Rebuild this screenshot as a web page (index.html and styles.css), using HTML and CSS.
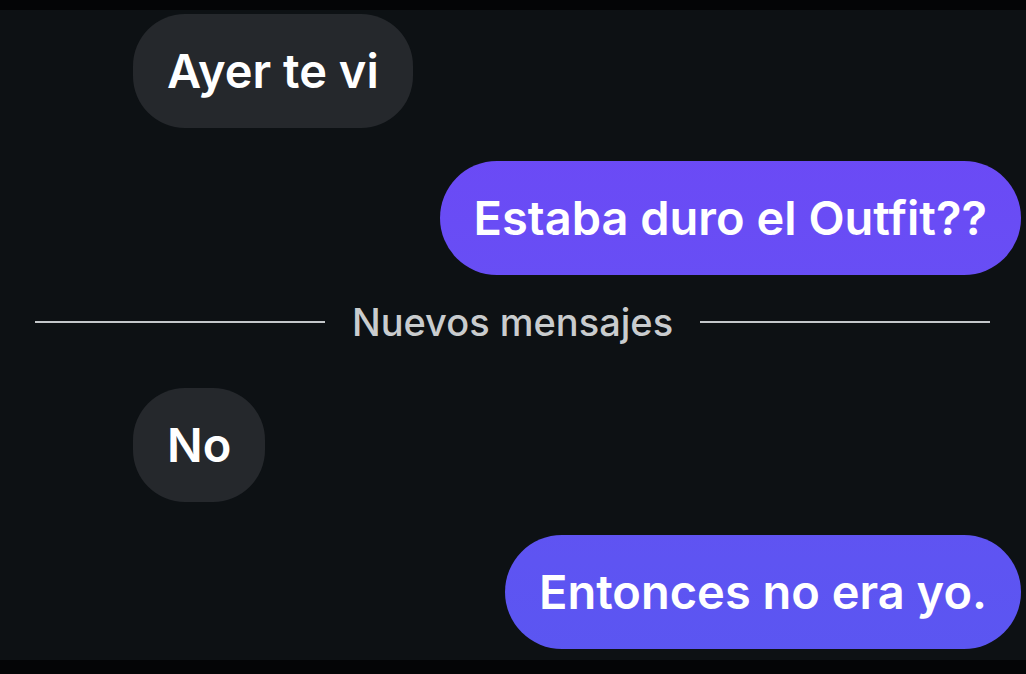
FILE: index.html
```html
<!DOCTYPE html>
<html lang="es">
<head>
    <meta charset="UTF-8">
    <meta name="viewport" content="width=device-width, initial-scale=1.0">
    <title>Chat</title>
    <link rel="stylesheet" href="styles.css">
</head>
<body>
    <div class="screen">
        <div class="strip top"></div>

        <div class="chat">
            <div class="bubble in first">Ayer te vi</div>
            <div class="bubble out">Estaba duro el Outfit??</div>

            <!-- New messages separator -->
            <div class="divider">
                <span class="line"></span>
                <span class="divider-text">Nuevos mensajes</span>
                <span class="line"></span>
            </div>

            <div class="bubble in after-divider">No</div>
            <div class="bubble out">Entonces no era yo.</div>
        </div>

        <div class="strip bottom"></div>
    </div>
</body>
</html>
```

FILE: styles.css
```css
* {
    box-sizing: border-box;
}
body {
    margin: 0;
    padding: 0;
    background-color: #0d1114;
    font-family: Inter, "Noto Sans", Arial, sans-serif;
    color: #fff;
}
.screen {
    height: 674px;
    display: flex;
    flex-direction: column;
    background-color: #0d1114;
    overflow: hidden;
}
.strip {
    background-color: #040506;
}
.strip.top {
    height: 10px;
}
.strip.bottom {
    height: 14px;
}
.chat {
    flex: 1;
    display: flex;
    flex-direction: column;
    padding-top: 4px;
}
.bubble {
    font-size: 47px;
    font-weight: 600;
    line-height: 50px;
    padding: 32px 34px;
    white-space: nowrap;
}
.bubble.in {
    align-self: flex-start;
    margin-left: 133px;
    background-color: #25282c;
    border-radius: 52px;
}
.bubble.out {
    align-self: flex-end;
    margin-right: 5px;
    margin-top: 33px;
    border-radius: 57px;
    background: linear-gradient(180deg, #6f45f7 0%, #6650f4 50%, #5a56f1 100%);
    background-attachment: fixed;
}
.bubble.after-divider {
    margin-top: 46px;
}
.divider {
    display: flex;
    align-items: center;
    gap: 27px;
    height: 40px;
    margin: 27px 36px 0 35px;
}
.divider .line {
    flex: 1;
    height: 2px;
    background-color: #c4c7ca;
}
.divider-text {
    font-size: 38px;
    font-weight: 500;
    color: #c9ccce;
    white-space: nowrap;
}
```
